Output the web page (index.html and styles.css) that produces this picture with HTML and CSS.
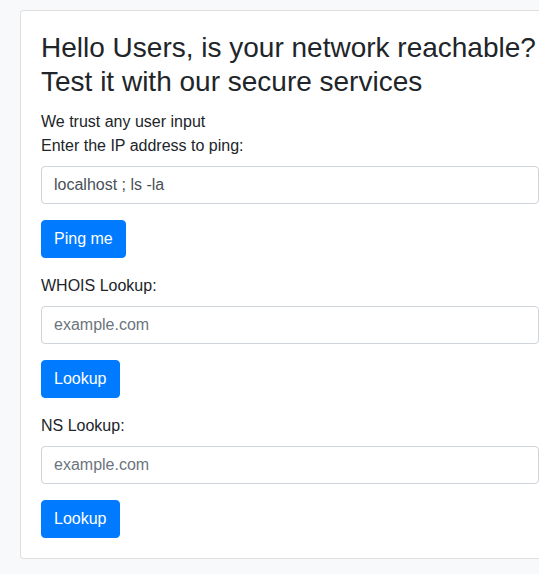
FILE: index.html
```html
<!DOCTYPE html>
<html lang="en">
<head>
<meta charset="utf-8">
<title>Network tools</title>
<link rel="stylesheet" href="styles.css">
</head>
<body>
<div class="page">
  <div class="card">
    <h3 class="title">Hello Users, is your network reachable? Test it with our secure services</h3>
    <p class="note">We trust any user input</p>
    <form class="tool">
      <label class="label" for="ip">Enter the IP address to ping:</label>
      <input class="field" id="ip" type="text" value="localhost ; ls -la">
      <button class="btn" type="button">Ping me</button>
    </form>
    <form class="tool">
      <label class="label" for="whois">WHOIS Lookup:</label>
      <input class="field" id="whois" type="text" placeholder="example.com">
      <button class="btn" type="button">Lookup</button>
    </form>
    <form class="tool">
      <label class="label" for="ns">NS Lookup:</label>
      <input class="field" id="ns" type="text" placeholder="example.com">
      <button class="btn" type="button">Lookup</button>
    </form>
  </div>
</div>
</body>
</html>
```
FILE: styles.css
```css
html, body {
  margin: 0;
  padding: 0;
  overflow: hidden;
  background: #f8f9fa;
}
body {
  font-family: "Liberation Sans", Arial, sans-serif;
  font-size: 16px;
  line-height: 1.5;
  color: #212529;
}
.page {
  padding: 10px 0 0 20px;
}
.card {
  width: 498px;
  padding: 20px;
  background: #fff;
  border: 1px solid rgba(0, 0, 0, 0.125);
  border-radius: 4px;
}
.title {
  margin: 0 0 12px;
  font-size: 28px;
  font-weight: 500;
  line-height: 1.2;
}
.note {
  margin: 0;
}
.tool {
  display: flex;
  flex-direction: column;
  align-items: flex-start;
}
.tool + .tool {
  margin-top: 16px;
}
.label {
  display: block;
  margin-bottom: 8px;
}
.field {
  box-sizing: border-box;
  width: 100%;
  height: 38px;
  margin: 0 0 16px;
  padding: 6px 12px;
  font-family: inherit;
  font-size: 16px;
  line-height: 1.5;
  color: #495057;
  background: #fff;
  border: 1px solid #ced4da;
  border-radius: 4px;
}
.field::placeholder {
  color: #6c757d;
  opacity: 1;
}
.btn {
  box-sizing: border-box;
  height: 38px;
  padding: 6px 12px;
  font-family: inherit;
  font-size: 16px;
  line-height: 1.5;
  color: #fff;
  background: #007bff;
  border: 1px solid #007bff;
  border-radius: 4px;
}
```
